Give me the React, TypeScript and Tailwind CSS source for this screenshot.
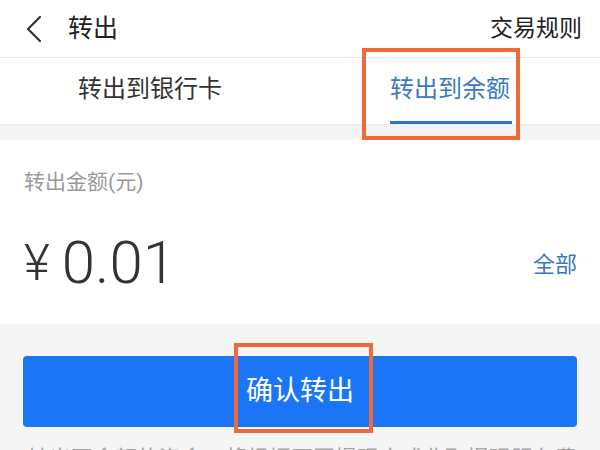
import React from 'react';

const font = { fontFamily: 'Roboto, "Noto Sans CJK SC", sans-serif' };

const App: React.FC = () => {
    return (
        <div className="relative w-[600px] h-[450px] overflow-hidden bg-[#f5f5f6]" style={font}>
            {/* header */}
            <div className="h-[58px] bg-white border-b border-[#e8e8e8] flex items-center px-[24px]">
                <svg width="20" height="30" viewBox="0 0 20 30" className="mr-[24px]">
                    <path d="M16 3 L4 15 L16 27" fill="none" stroke="#333" strokeWidth="2.2" strokeLinecap="round" strokeLinejoin="round" />
                </svg>
                <span className="text-[25px] leading-none text-[#222]">转出</span>
                <span className="ml-auto text-[23px] leading-none text-[#222] mr-[-6px]">交易规则</span>
            </div>

            {/* tabs */}
            <div className="h-[66px] bg-white flex">
                <div className="flex-1 flex items-center justify-center">
                    <span className="text-[24px] leading-none text-[#333] mt-[-4px]">转出到银行卡</span>
                </div>
                <div className="flex-1 flex items-center justify-center relative">
                    <span className="text-[24px] leading-none text-[#3a78c3] mt-[-4px]">转出到余额</span>
                    <div className="absolute bottom-[0px] left-[90px] w-[122px] h-[3px] bg-[#2f74d0]" />
                </div>
            </div>
            <div className="h-[16px] bg-[#f4f4f4] border-t border-[#ececec]" />

            {/* amount */}
            <div className="h-[184px] bg-white px-[24px] pt-[32px]">
                <div className="text-[21px] leading-none text-[#9a9a9a]">转出金额(元)</div>
                <div className="flex items-center mt-[40px]">
                    <span className="text-[50px] leading-none text-[#333]" style={{ fontFamily: 'Roboto, sans-serif', fontWeight: 300 }}>¥</span>
                    <span className="text-[60px] leading-none text-[#333] ml-[12px]" style={{ fontFamily: 'Roboto, sans-serif', fontWeight: 300 }}>0.01</span>
                    <span className="ml-auto text-[22px] leading-none text-[#3a78c3] mr-[-1px] mt-[4px]">全部</span>
                </div>
            </div>

            {/* button */}
            <div className="px-[23px] pt-[32px]">
                <div className="relative h-[71px] rounded-[4px] bg-[#1a75f7] flex items-center justify-center">
                    <span className="text-[27px] leading-none text-white">确认转出</span>
                    <div className="absolute left-[211px] top-[-13px] w-[139px] h-[90px] border-[4px] border-[#ec6a3b]" />
                </div>
                <div className="mt-[16px] text-[22px] leading-[32px] text-[#a5a5a5] whitespace-nowrap pl-[4px]">
                    转出至余额的资金，将根据不同提现方式收取提现服务费，请注意
                </div>
            </div>

            {/* tab highlight box */}
            <div className="absolute left-[362px] top-[48px] w-[158px] h-[92px] border-[4px] border-[#ec6a3b]" />
        </div>
    );
};

export default App;
